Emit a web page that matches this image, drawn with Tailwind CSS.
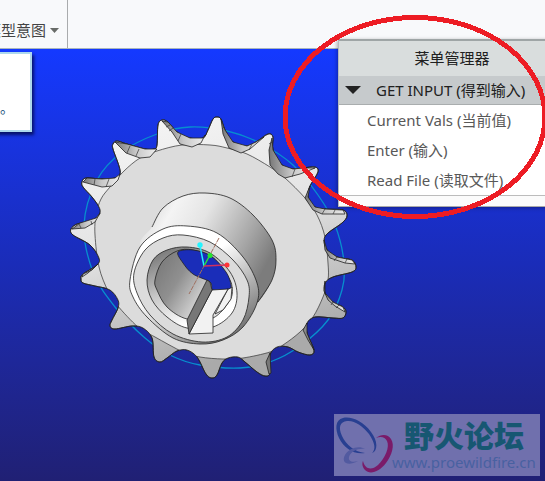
<!DOCTYPE html>
<html lang="zh-CN">
<head>
<meta charset="utf-8">
<title>菜单管理器</title>
<script src="https://cdn.jsdelivr.net/npm/@tailwindcss/browser@4"></script>
</head>
<body class="relative flex h-screen flex-col overflow-hidden font-['Noto_Sans','Noto_Sans_CJK_SC',sans-serif]">
<header class="flex h-12 shrink-0 bg-[#f8f9fb] text-[15px] text-[#444]">
  <div class="flex w-17 items-end overflow-hidden border-r border-[#a9abad] pb-1.5">
    <button class="-ml-3.5 flex items-center gap-1 whitespace-nowrap leading-6">模型意图
      <svg class="h-[5px] w-[9px]" viewBox="0 0 9 5"><path d="M0 0H9L4.500 5Z" fill="#686b68"/></svg>
    </button>
  </div>
</header>
<main class="relative flex-1 overflow-hidden border-t border-[#a8b5bd] bg-linear-to-b from-[#1439ff] via-[#1a2cb8] to-[#202074]">
  <div class="absolute top-[3px] -left-2 flex h-20 w-10 items-end justify-end border-2 border-[#add8ed] bg-white pr-4 pb-3 text-sm text-[#145078] shadow-[2px_3px_3px_#07136b]">。</div>
  <svg class="absolute top-14 left-[60px] h-[285px] w-[305px]" viewBox="60 105 305 285" fill="none" stroke-linejoin="round" aria-hidden="true">
    <defs>
      <clipPath id="body"></clipPath>
      <linearGradient id="teeth" x1="0" y1="0" x2="0.3" y2="1"><stop offset="0" stop-color="#f8f8f8"/><stop offset=".5" stop-color="#e4e4e4"/><stop offset="1" stop-color="#aaa"/></linearGradient>
      <linearGradient id="hub" gradientUnits="userSpaceOnUse" x1="150" y1="210" x2="263" y2="271"><stop offset="0" stop-color="#dedede"/><stop offset=".15" stop-color="#f4f4f4"/><stop offset=".4" stop-color="#e4e4e4"/><stop offset=".78" stop-color="#a5a5a5"/><stop offset="1" stop-color="#7c7c7c"/></linearGradient>
      <linearGradient id="rim" gradientUnits="userSpaceOnUse" x1="165" y1="232" x2="236" y2="336"><stop offset="0" stop-color="#fff"/><stop offset=".35" stop-color="#fff"/><stop offset="1" stop-color="#707070"/></linearGradient>
      <linearGradient id="bevel" gradientUnits="userSpaceOnUse" x1="160" y1="250" x2="192" y2="322"><stop offset="0" stop-color="#777"/><stop offset=".5" stop-color="#c5c5c5"/><stop offset="1" stop-color="#fff"/></linearGradient>
      <linearGradient id="bore" gradientUnits="userSpaceOnUse" x1="158" y1="273" x2="208" y2="305"><stop offset="0" stop-color="#7f7f7f"/><stop offset=".35" stop-color="#909090"/><stop offset="1" stop-color="#e5e5e5"/></linearGradient>
      <linearGradient id="gap"><stop offset="0" stop-color="#777"/><stop offset=".5" stop-color="#c8c8c8"/><stop offset="1" stop-color="#eee"/></linearGradient>
    </defs>
    <g id="model" stroke="#222" stroke-width=".8"></g>
    <g stroke="#333" stroke-width=".7">
      <path d="M95 179l-1 6M109 179l-3 8M130 146l-3 7M139 149l-3 7M170 125l-4 2M173 128l-4 3M181 134l-3 7M252 144l-3 6M295 169l-3 8M325 209l-3 5M335 210l-2 4M337 257l-3 4M347 259l-2 4M333 302l-2 3M339 305l-3 3M79 224l2 4M91 221l1 4M224 127l-2 2M272 142l-3 2"/>
    </g>
    <path d="M219 238L189 294" stroke="#a07060" stroke-dasharray="5 1"/>
    <g stroke-width="1.500">
      <path d="M204 266L200 246" stroke="#22eeff"/><path d="M204 266L210 255" stroke="#20e040"/><path d="M204 266L226 265" stroke="#d02f60"/>
    </g>
    <circle cx="200" cy="245" r="2.700" fill="#25f4ff"/><circle cx="210" cy="255.500" r="2.500" fill="#22e52d"/><circle cx="227" cy="265" r="2.500" fill="#ff3636"/>
  </svg>
  <div class="absolute right-[5px] bottom-[5px] flex h-[62px] w-[206px] bg-[#7070ad]">
    <svg class="w-[58px] shrink-0 overflow-visible" viewBox="0 0 58 62" aria-hidden="true">
      <path fill="#283f91" d="M38 39C44 37 44 27 37 18C29 7 17 2 9 4C1 6 1 15 5 24C10 34 20 41 31 39C21 38 12 31 8 22C4 13 6 8 13 7C20 6 29 12 35 20C41 29 42 35 38 39Z"/>
      <path fill="#7a1b69" d="M42 24C47 20 54 20 57 25C61 31 58 41 52 49C45 58 36 61 31 56C28 53 28 49 29 47C31 55 37 57 44 51C51 44 56 33 53 27C51 23 47 22 42 24Z"/>
      <path fill="#525aa0" d="M31 35C25 31 15 34 11 41C7 48 13 53 24 47C18 49 14 47 15 43C17 37 24 34 31 35Z"/>
    </svg>
    <div class="flex flex-1 flex-col whitespace-nowrap">
      <span class="pt-1 pl-3 font-['Noto_Sans_CJK_SC',sans-serif] text-[30px] leading-8 font-black text-[#175772]">野火论坛</span>
      <span class="text-[15px] leading-6 text-[#4861a1]">www.proewildfire.cn</span>
    </div>
  </div>
</main>
<nav class="absolute top-[39px] left-[338px] w-[228px] border border-t-2 border-t-[#9fa5a6] border-l-[#b6babb] border-b-[#aaa] bg-[#fbfbfb] text-[15px] text-[#585858] shadow-[-1px_1px_4px_#0005]">
  <h1 class="bg-[#d9dddd] text-center leading-[35px] text-[#202020]">菜单管理器</h1>
  <button class="flex w-full items-center gap-[15px] border-b border-[#a9adae] bg-[#c6cacc] pl-1.5 leading-7 whitespace-nowrap text-[#202020]">
    <svg class="h-2 w-4" viewBox="0 0 16 8"><path d="M0 0H16L8 8Z" fill="#222"/></svg>GET INPUT (得到输入)
  </button>
  <div class="flex flex-col border-b border-[#bcbcbc] bg-white pl-7 leading-[30px]">
    <a href="#current">Current Vals (当前值)</a>
    <a href="#enter">Enter (输入)</a>
    <a href="#read">Read File (读取文件)</a>
  </div>
  <div class="h-2.5"></div>
</nav>
<svg class="pointer-events-none absolute top-0 left-[280px] h-[230px] w-[270px]" viewBox="0 0 270 230" aria-hidden="true"><ellipse cx="135" cy="117" rx="130" ry="99.500" fill="none" stroke="#ed1c24" stroke-width="5" shape-rendering="crispEdges"/></svg>
<script>
// Each entry: [fill, points, 1 = closed curve / 2 = open curve, stroke override, clip to the sprocket body]
const outline = "71,229 77,224 88,222 96,218 100,213 99,207 92,197 83,187 82,182 86,178 102,179 115,178 120,174 119,166 113,149 113,144 117,141 127,144 145,149 154,149 157,145 158,125 162,120 168,122 177,132 190,138 203,138 208,130 213,119 217,117 221,119 225,130 233,142 247,146 256,142 268,134 273,137 273,150 282,165 293,169 303,168 315,167 318,172 310,186 308,197 315,207 325,209 343,210 347,216 342,223 328,233 324,240 327,250 337,257 352,260 356,267 352,272 333,277 325,283 325,293 333,302 343,307 346,312 343,318 333,318 315,317 307,323 307,333 314,350 310,355 298,352 288,347 277,347 270,355 270,373 265,376 257,372 245,362 238,357 228,358 222,363 217,375 212,378 206,374 197,357 187,350 177,351 167,358 160,362 154,357 152,338 143,328 132,326 115,329 110,326 112,320 118,308 118,300 110,290 95,286 83,283 81,279 83,274 97,265 99,258 90,245 73,235";
const shapes = [
  ["none", "84,225 97,180 122,152 157,134 190,127 227,131 260,143 293,165 318,195 335,225 344,262 342,290 328,320 300,346 270,362 240,368 200,365 172,356 145,338 115,307 93,272", 1, "#078fce"],
  ["url(#teeth)", outline, 1],
  ["#dcdcdc", "95,235 96,215 101,199 110,187 124,171 140,158 157,151 182,145 210,145 227,148 247,154 270,167 285,178 305,198 317,215 325,237 328,263 328,280 323,297 313,317 300,332 283,345 270,352 243,358 223,359 200,357 183,352 155,337 138,327 117,305 108,291 99,267", 1, "#444", 1],
  ["none", outline, 1],
  ["url(#gap)", "72,229 85,228 95,222 100,213 96,218 80,223"],
  ["url(#gap)", "83,182 102,187 112,186 118,180 120,174 115,178 102,179 87,178"],
  ["url(#gap)", "115,142 126,153 140,158 150,157 157,149 145,149 127,144"],
  ["url(#gap)", "162,121 172,132 180,144 192,147 201,143 205,135 203,138 190,138 177,132 168,122"],
  ["url(#gap)", "221,119 223,134 229,148 241,153 250,149 264,137 256,142 247,146 233,142 225,130"],
  ["url(#gap)", "272,138 269,150 270,165 278,174 285,178 300,174 315,168 303,168 293,169 282,165 273,150"],
  ["url(#gap)", "310,186 305,198 313,210 322,214 345,214 343,210 325,209 315,207 308,197"],
  ["url(#gap)", "324,240 325,250 330,258 345,263 355,264 352,260 337,257 327,250"],
  ["url(#gap)", "325,281 324,291 328,300 335,306 345,312 343,307 333,302 325,293"],
  ["#888", "307,323 303,330 308,340 314,350 307,333"],
  ["#777", "270,353 266,362 269,374 271,373"],
  ["#ccc", "82,277 88,273 98,264 92,270 83,274"],
  ["url(#hub)", "152,227 163,208 183,196 205,193 230,198 253,215 272,240 276,260 272,280 258,302 230,325 160,285 140,247", 1, "none"],
  ["none", "152,227 163,208 183,196 205,193 230,198 253,215 272,240 276,260 272,280 258,302", 2],
  ["url(#rim)", "130,280 140,247 163,229 187,226 217,233 243,257 257,283 257,303 243,327 223,340 200,344 173,338 147,317 133,297", 1],
  ["#dcdcdc", "134,273 145,250 163,238 183,235 210,242 233,260 247,280 249,297 243,320 227,337 202,342 173,334 150,315 137,293", 1],
  ["url(#bevel)", "147,280 153,260 167,250 187,247 210,253 230,272 237,293 232,313 213,327 187,328 167,317 152,300", 1],
  ["url(#bore)", "155,280 162,262 177,251 193,250 213,258 228,277 232,287 230,300 213,318 187,319 167,307 157,290", 1],
  ["#f1f1f1", "232,287 228,289 215,314 223,310 231,299", 0],
  ["#1a2db9", "178,252 193,250 211,256 226,272 231,285 228,289 213,290 210,282 193,274 183,263", 1],
  ["#f2f2f2", "212,290 228,289 213,315 213,333 189,334"],
  ["#777", "207,280 210,282 212,290 189,334 187,320"]
];
const model = document.getElementById("model");
const SVG = "http://www.w3.org/2000/svg";
function trace(text, mode) {
  const p = text.split(" ").map(v => v.split(",").map(Number)), n = p.length;
  let d = "M" + p[0];
  if (!mode) return d + "L" + p.slice(1).join("L") + "Z";
  const at = i => mode === 1 ? p[(i + n) % n] : p[Math.max(0, Math.min(n - 1, i))];
  for (let i = 0; i < (mode === 1 ? n : n - 1); i++) {
    const [a, b, c, e] = [at(i - 1), at(i), at(i + 1), at(i + 2)];
    d += "C" + [b[0] + (c[0] - a[0]) / 6, b[1] + (c[1] - a[1]) / 6, c[0] - (e[0] - b[0]) / 6, c[1] - (e[1] - b[1]) / 6, ...c];
  }
  return d;
}
const clip = document.createElementNS(SVG, "path");
clip.setAttribute("d", trace(outline, 1));
document.getElementById("body").append(clip);
for (const [fill, text, mode, stroke, clipped] of shapes) {
  const path = document.createElementNS(SVG, "path");
  path.setAttribute("d", trace(text, mode));
  path.setAttribute("fill", fill);
  if (stroke) path.setAttribute("stroke", stroke);
  if (clipped) path.setAttribute("clip-path", "url(#body)");
  if (stroke === "#078fce") path.setAttribute("stroke-width", "1.3");
  model.append(path);
}
</script>
</body>
</html>
